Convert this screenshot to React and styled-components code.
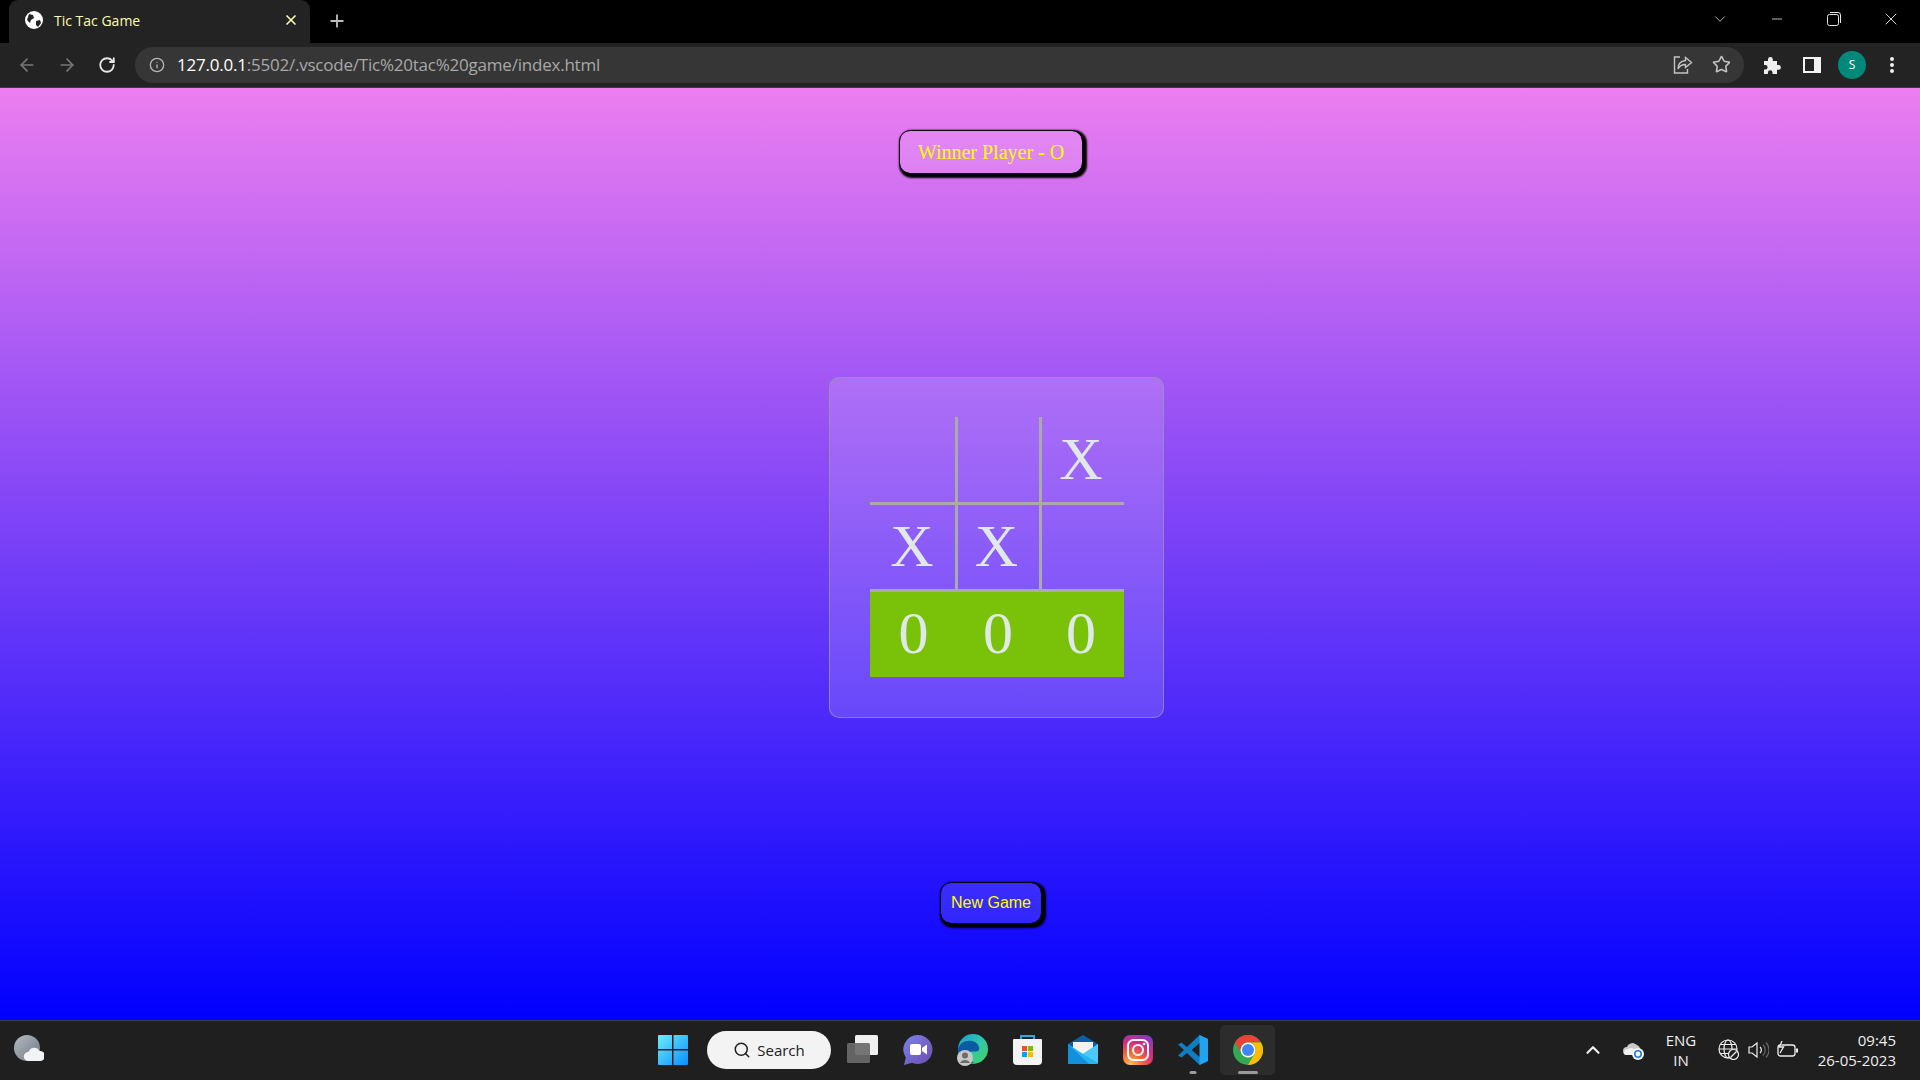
import React from "react"
import styled, { createGlobalStyle } from "styled-components"
import { ArrowLeft, ArrowRight, RotateCw, Info, Star, Search, X, Plus, ChevronDown, ChevronUp, Minus } from "lucide-react"

const Global = createGlobalStyle`
  html, body { margin: 0; padding: 0; height: 100%; overflow: hidden; }
  body { font-family: "Open Sans", "Liberation Sans", sans-serif; }
  * { box-sizing: border-box; }
`

const Shell = styled.div`
  width: 1920px;
  height: 1080px;
  display: flex;
  flex-direction: column;
`

const TabStrip = styled.div`
  height: 43px;
  background: #000;
  display: flex;
  align-items: flex-end;
  padding-left: 9px;
  color: #fff;
`

const Tab = styled.div`
  width: 301px;
  height: 43px;
  background: #232323;
  border-radius: 9px 9px 0 0;
  display: flex;
  align-items: center;
  padding: 0 11px 3px 16px;
`

const TabTitle = styled.span`
  font-size: 14px;
  color: #fdfdb4;
  margin-left: 11px;
  flex: 1;
`

const NewTab = styled.div`
  width: 54px;
  height: 41px;
  padding-bottom: 3px;
  display: flex;
  align-items: center;
  justify-content: center;
  color: #bdbdbd;
`

const WindowControls = styled.div`
  margin-left: auto;
  height: 43px;
  display: flex;
  align-items: center;
  padding: 0 1px 5px 0;
`

const WindowButton = styled.div`
  width: 57px;
  height: 37px;
  display: flex;
  align-items: center;
  justify-content: center;
  color: #e8e8e8;
`

const Toolbar = styled.div`
  height: 45px;
  background: #232323;
  display: flex;
  align-items: center;
  padding: 0 8px 1px 7px;
  border-bottom: 1px solid #3c3c3c;
`

const NavButton = styled.div`
  width: 40px;
  height: 36px;
  display: flex;
  align-items: center;
  justify-content: center;
  color: ${(p) => (p.$on ? "#e8e8e8" : "#777")};
`

const Omnibox = styled.div`
  width: 1610px;
  height: 36px;
  margin-left: 8px;
  background: #363636;
  border-radius: 18px;
  display: flex;
  align-items: center;
  padding: 0 3px 0 14px;
  color: #b5b5b5;
`

const Url = styled.div`
  margin-left: 12px;
  font-size: 17px;
  letter-spacing: -0.22px;
  color: #a8a8a8;
  flex: 1;
  b { font-weight: 400; color: #fff; }
`

const OmniIcon = styled.div`
  width: 39px;
  display: flex;
  justify-content: center;
  color: #c4c4c4;
`

const ToolIcons = styled.div`
  display: flex;
  align-items: center;
  margin-left: 8px;
`

const ToolIcon = styled.div`
  width: 40px;
  display: flex;
  justify-content: center;
  color: #eee;
`

const Avatar = styled.div`
  width: 28px;
  height: 28px;
  border-radius: 50%;
  background: #00897b;
  color: #fff;
  font-size: 12px;
  display: flex;
  align-items: center;
  justify-content: center;
`

const Page = styled.main`
  flex: 1;
  background: linear-gradient(#ec7ef0, blue);
  display: flex;
  flex-direction: column;
  align-items: center;
  padding: 43px 0 0 62px;
`

const GameButton = styled.button`
  height: ${(p) => p.$h}px;
  width: ${(p) => p.$w}px;
  border: 0;
  border-radius: 10px;
  background: rgba(255, 255, 255, 0.11);
  color: yellow;
  font-family: ${(p) => (p.$serif ? '"Liberation Serif", serif' : '"Liberation Sans", sans-serif')};
  font-size: ${(p) => (p.$serif ? 20 : 16)}px;
  box-shadow: 2px 2px 2px 3px #000;
  outline: 1px solid rgba(0, 0, 0, 0.75);
  padding: 0;
`

const Board = styled.div`
  width: 335px;
  height: 341px;
  margin: 204px 0 165px 10px;
  padding: 39px 40px 41px;
  border: 1px solid rgba(150, 150, 170, 0.75);
  border-radius: 10px;
  background: rgba(255, 255, 255, 0.15);
`

const Grid = styled.div`
  display: grid;
  grid-template-columns: 88px 84px 82px;
  grid-template-rows: 88px 87px 85px;
`

const Cell = styled.div`
  display: flex;
  align-items: center;
  justify-content: center;
  padding-bottom: ${(p) => p.$lift}px;
  font-family: "Liberation Serif", serif;
  font-size: 60px;
  color: #e0e8e8;
  background: ${(p) => (p.$win ? "#7ac20a" : "transparent")};
  border-right: ${(p) => (p.$right ? "3px solid #aaa" : "0")};
  border-bottom: ${(p) => (p.$bottom ? "3px solid #aaa" : "0")};
  &:not(:nth-child(3n + 1)) {
    padding-right: 3px;
  }
`

const Taskbar = styled.div`
  height: 60px;
  background: #1f1f1f;
  border-top: 1px solid #3d3d4a;
  padding-bottom: 2px;
  display: flex;
  align-items: center;
  position: relative;
`

const Weather = styled.div`
  width: 648px;
  padding-left: 14px;
  display: flex;
`

const StartSlot = styled.div`
  width: 50px;
  display: flex;
  justify-content: center;
`

const SearchPill = styled.div`
  width: 124px;
  height: 38px;
  margin: 0 4px 0 9px;
  background: #f3f3f3;
  border-radius: 19px;
  display: flex;
  align-items: center;
  justify-content: center;
  gap: 6px;
  color: #222;
  font-size: 15px;
`

const AppSlot = styled.div`
  width: 55px;
  height: 50px;
  border-radius: 5px;
  display: flex;
  align-items: center;
  justify-content: center;
  position: relative;
  background: ${(p) => (p.$active ? "#2c2c2c" : "transparent")};
`

const Indicator = styled.span`
  position: absolute;
  bottom: 1px;
  left: 50%;
  transform: translateX(-50%);
  width: ${(p) => (p.$wide ? 20 : 7)}px;
  height: 3px;
  border-radius: 2px;
  background: #9a9a9a;
`

const Tray = styled.div`
  margin-left: auto;
  display: flex;
  align-items: center;
  color: #eee;
  padding-right: 24px;
`

const TrayIcon = styled.div`
  width: ${(p) => p.$w}px;
  display: flex;
  justify-content: center;
`

const Lang = styled.div`
  width: 56px;
  text-align: center;
  font-size: 15px;
  line-height: 20px;
  margin-right: 4px;
`

const Clock = styled.div`
  width: 93px;
  text-align: right;
  font-size: 15px;
  line-height: 20px;
  white-space: nowrap;
`

const Globe = () => (
  <svg width="18" height="18" viewBox="0 0 18 18">
    <circle cx="9" cy="9" r="9" fill="#fff" />
    <path d="M4 3l4 1 1 3-3 2-1 3-3-3zM11 10l4-1 1 3-3 4-2-2z" fill="#232323" />
  </svg>
)

const Puzzle = () => (
  <svg width="20" height="20" viewBox="0 0 20 20" fill="currentColor">
    <path d="M2 6h4V4.500a2.400 2.400 0 0 1 4.800 0V6h4.200v4h1.500a2.400 2.400 0 0 1 0 4.800H15V19H10.500v-1.500a2.300 2.300 0 0 0-4.600 0V19H2v-4.500h1.300a2.300 2.300 0 0 0 0-4.600H2z" />
  </svg>
)

const Share = () => (
  <svg width="20" height="20" viewBox="0 0 20 20" fill="none" stroke="currentColor" strokeWidth="1.4">
    <path d="M7 2H1.500v16h13v-4" />
    <path d="M12.500 2.500l6 5-6 5V9.500C9 9.500 6.500 11 5 14c0-5 3-8 7.500-8.500z" />
  </svg>
)

const SidePanel = () => (
  <svg width="18" height="18" viewBox="0 0 18 18">
    <rect x="0" y="1" width="18" height="16" fill="#f2f2f2" />
    <rect x="2" y="3" width="9" height="12" fill="#232323" />
  </svg>
)

const Restore = () => (
  <svg width="14" height="14" viewBox="0 0 14 14" fill="none" stroke="currentColor" strokeWidth="1">
    <rect x="0.500" y="2.500" width="11" height="11" rx="2" />
    <path d="M3 .5h8a2.500 2.500 0 0 1 2.500 2.500v8" />
  </svg>
)

const WeatherIcon = () => (
  <svg width="30" height="30" viewBox="0 0 30 30">
    <defs>
      <linearGradient id="moon" x1="0" y1="0" x2="1" y2="1">
        <stop offset="0" stopColor="#b4bcc4" />
        <stop offset="1" stopColor="#6e7780" />
      </linearGradient>
    </defs>
    <circle cx="13" cy="13" r="13" fill="url(#moon)" />
    <path d="M14 26a4.500 4.500 0 0 1 .5-9 6 6 0 0 1 11-1 5 5 0 0 1 1 10z" fill="#f1f3f4" />
  </svg>
)

const WinLogo = () => (
  <svg width="30" height="30" viewBox="0 0 30 30">
    <defs>
      <linearGradient id="winl" x1="0" y1="0" x2="1" y2="1">
        <stop offset="0" stopColor="#6cecfb" />
        <stop offset="1" stopColor="#0a8fff" />
      </linearGradient>
    </defs>
    <path d="M1 0h13v14H0V1a1 1 0 0 1 1-1zM15.500 0H29a1 1 0 0 1 1 1v13H15.500zM0 15.500h14V30H1a1 1 0 0 1-1-1zM15.500 15.500H30V29a1 1 0 0 1-1 1H15.500z" fill="url(#winl)" />
  </svg>
)

const TaskView = () => (
  <svg width="31" height="29" viewBox="0 0 31 29">
    <rect x="8" y="0" width="23" height="20" rx="1.500" fill="#f0f0f0" />
    <rect x="0" y="8" width="23" height="20" rx="1.500" fill="#6a6a6a" fillOpacity="0.92" />
  </svg>
)

const Meet = () => (
  <svg width="30" height="30" viewBox="0 0 30 30">
    <defs>
      <linearGradient id="meet" x1="0" y1="0" x2="1" y2="1">
        <stop offset="0" stopColor="#7b83eb" />
        <stop offset="1" stopColor="#6d4aad" />
      </linearGradient>
    </defs>
    <path d="M15 0a14.500 14.500 0 1 1-6 27.700L1 30l1.800-7.500A14.500 14.500 0 0 1 15 0z" fill="url(#meet)" />
    <rect x="7" y="9" width="11" height="11" rx="2" fill="#fff" />
    <path d="M19 13l5-3.500v10L19 16z" fill="#fff" />
  </svg>
)

const Edge = () => (
  <svg width="32" height="32" viewBox="0 0 32 32">
    <defs>
      <linearGradient id="edgeg" x1="0" y1="0" x2="1" y2="1">
        <stop offset="0" stopColor="#1a9ad8" />
        <stop offset="0.5" stopColor="#2fc8a8" />
        <stop offset="1" stopColor="#49d25f" />
      </linearGradient>
    </defs>
    <circle cx="16" cy="15" r="15" fill="url(#edgeg)" />
    <path d="M1 15C3 7 12 5 18 8c5 3 5 8 3 9-3 1-6 0-8 1-3 2 0 8 4 11-8 2-16-5-16-14z" fill="#0c59a4" />
    <circle cx="8" cy="24" r="8" fill="#c8c8c8" />
    <circle cx="8" cy="21.500" r="3" fill="#6b6b6b" />
    <path d="M3 29a5.500 5 0 0 1 10 0z" fill="#6b6b6b" />
  </svg>
)

const Store = () => (
  <svg width="29" height="31" viewBox="0 0 29 31">
    <path d="M8 6V2h13v4" fill="none" stroke="#2aa6e8" strokeWidth="2" />
    <path d="M1 5h27a1 1 0 0 1 1 1v21a4 4 0 0 1-4 4H4a4 4 0 0 1-4-4V6a1 1 0 0 1 1-1z" fill="#f4f4f4" />
    <rect x="9" y="12" width="5" height="5" fill="#f25022" />
    <rect x="15" y="12" width="5" height="5" fill="#7fba00" />
    <rect x="9" y="18" width="5" height="5" fill="#00a4ef" />
    <rect x="15" y="18" width="5" height="5" fill="#ffb900" />
  </svg>
)

const Mail = () => (
  <svg width="30" height="29" viewBox="0 0 30 29">
    <path d="M0 9l15-9 15 9v4H0z" fill="#0b5fa8" />
    <path d="M5 7h20v12H5z" fill="#f2f2f2" />
    <path d="M0 9l15 10L30 9v19a1 1 0 0 1-1 1H1a1 1 0 0 1-1-1z" fill="#25b6f2" />
    <path d="M0 9v19a1 1 0 0 0 1 1h20z" fill="#1390dc" />
    <path d="M30 28L15 19l15-10z" fill="#4ccaf7" />
  </svg>
)

const Instagram = () => (
  <svg width="30" height="30" viewBox="0 0 30 30">
    <defs>
      <radialGradient id="ig" cx="0.25" cy="1" r="1.200">
        <stop offset="0" stopColor="#fdc15b" />
        <stop offset="0.35" stopColor="#f0663a" />
        <stop offset="0.65" stopColor="#d22a85" />
        <stop offset="1" stopColor="#6a45c8" />
      </radialGradient>
    </defs>
    <rect width="30" height="30" rx="7" fill="url(#ig)" />
    <rect x="5" y="5" width="20" height="20" rx="5.500" fill="none" stroke="#fff" strokeWidth="2" />
    <circle cx="15" cy="15" r="5" fill="none" stroke="#fff" strokeWidth="2" />
    <circle cx="21" cy="9" r="1.300" fill="#fff" />
  </svg>
)

const VsCode = () => (
  <svg width="30" height="30" viewBox="0 0 30 30">
    <path d="M21.500 0L30 4v22l-8.500 4L9 18l-5.500 4.500L0 20.500 6 15 0 9.500 3.500 7.500 9 12z" fill="#0f7cc4" />
    <path d="M21.500 0L30 4v22l-8.500 4zM21.500 8l-8 7 8 7z" fill="#22a3ef" />
    <path d="M21.500 8l-8 7 8 7z" fill="#1f1f1f" />
  </svg>
)

const Chrome = () => (
  <svg width="30" height="30" viewBox="0 0 30 30">
    <circle cx="15" cy="15" r="15" fill="#34a853" />
    <path d="M15 0a15 15 0 0 1 13 7.500H15a7.500 7.500 0 0 0-6.500 11.250L2 7.500A15 15 0 0 1 15 0z" fill="#ea4335" />
    <path d="M28 7.500A15 15 0 0 1 15 30l6.500-11.250A7.500 7.500 0 0 0 15 7.500z" fill="#fbbc04" />
    <circle cx="15" cy="15" r="7.500" fill="#fff" />
    <circle cx="15" cy="15" r="6" fill="#4285f4" />
  </svg>
)

const CloudSync = () => (
  <svg width="22" height="20" viewBox="0 0 22 20">
    <path d="M5 15a4 4 0 0 1 0-8 6 6 0 0 1 10-2 5 5 0 0 1 3 5v5z" fill="#c9c9c9" />
    <path d="M3 15a3.500 3.500 0 0 1 3-6 5 5 0 0 1 7 1v5z" fill="#f1f1f1" />
    <circle cx="16" cy="14" r="6" fill="#f4f8fb" />
    <circle cx="16" cy="14" r="3.200" fill="none" stroke="#2a7fd4" strokeWidth="1.600" />
  </svg>
)

const GlobeOff = () => (
  <svg width="21" height="21" viewBox="0 0 21 21" fill="none" stroke="currentColor" strokeWidth="1.200">
    <circle cx="10" cy="10" r="9" />
    <ellipse cx="10" cy="10" rx="4" ry="9" />
    <path d="M1 10h18M2.500 5.500h15M2.500 14.500h15" />
    <circle cx="15.500" cy="15.500" r="5" fill="#1f1f1f" />
    <path d="M12.500 18.500l6-6" />
  </svg>
)

const Speaker = () => (
  <svg width="21" height="18" viewBox="0 0 21 18" fill="none" stroke="currentColor" strokeWidth="1.200">
    <path d="M1 6h3l5-4v14l-5-4H1z" />
    <path d="M12 6a4 4 0 0 1 0 6" />
    <path d="M15 3.500a8 8 0 0 1 0 11M18 1.500a11 11 0 0 1 0 15" stroke="#666" />
  </svg>
)

const Battery = () => (
  <svg width="22" height="18" viewBox="0 0 22 18" fill="none" stroke="currentColor" strokeWidth="1.300">
    <rect x="1" y="4" width="17" height="11" rx="2.500" />
    <path d="M20 7.500v4" strokeWidth="2" />
    <path d="M5 0L2.500 6h4L3 12" fill="#1f1f1f" />
  </svg>
)

const rows = [
  ["", "", "X"],
  ["X", "X", ""],
  ["0", "0", "0"],
]

const lifts = [0, 2, 2]

export default function App() {
  return (
    <Shell>
      <Global />
      <TabStrip>
        <Tab>
          <Globe />
          <TabTitle>Tic Tac Game</TabTitle>
          <X size={16} color="#fdfdb4" strokeWidth={2.5} />
        </Tab>
        <NewTab>
          <Plus size={20} strokeWidth={2.2} />
        </NewTab>
        <WindowControls>
          <WindowButton><ChevronDown size={18} strokeWidth={1} /></WindowButton>
          <WindowButton><Minus size={16} strokeWidth={1.2} /></WindowButton>
          <WindowButton><Restore /></WindowButton>
          <WindowButton><X size={20} strokeWidth={1.1} /></WindowButton>
        </WindowControls>
      </TabStrip>
      <Toolbar>
        <NavButton><ArrowLeft size={20} /></NavButton>
        <NavButton><ArrowRight size={20} /></NavButton>
        <NavButton $on><RotateCw size={18} strokeWidth={2.4} /></NavButton>
        <Omnibox>
          <Info size={16} />
          <Url><b>127.0.0.1</b>:5502/.vscode/Tic%20tac%20game/index.html</Url>
          <OmniIcon><Share /></OmniIcon>
          <OmniIcon><Star size={19} /></OmniIcon>
        </Omnibox>
        <ToolIcons>
          <ToolIcon><Puzzle /></ToolIcon>
          <ToolIcon><SidePanel /></ToolIcon>
          <ToolIcon><Avatar>S</Avatar></ToolIcon>
          <ToolIcon>
            <svg width="6" height="18" viewBox="0 0 6 18" fill="currentColor">
              <circle cx="3" cy="3" r="2" />
              <circle cx="3" cy="9" r="2" />
              <circle cx="3" cy="15" r="2" />
            </svg>
          </ToolIcon>
        </ToolIcons>
      </Toolbar>
      <Page>
        <GameButton $w={182} $h={42} $serif>Winner Player - O</GameButton>
        <Board>
          <Grid>
            {rows.flatMap((row, r) =>
              row.map((mark, c) => (
                <Cell key={`${r}-${c}`} $lift={lifts[r]} $win={r === 2} $right={r < 2 && c < 2} $bottom={r < 2}>
                  {mark}
                </Cell>
              ))
            )}
          </Grid>
        </Board>
        <GameButton $w={100} $h={40}>New Game</GameButton>
      </Page>
      <Taskbar>
        <Weather><WeatherIcon /></Weather>
        <StartSlot><WinLogo /></StartSlot>
        <SearchPill><Search size={18} />Search</SearchPill>
        <AppSlot><TaskView /></AppSlot>
        <AppSlot><Meet /></AppSlot>
        <AppSlot><Edge /></AppSlot>
        <AppSlot><Store /></AppSlot>
        <AppSlot><Mail /></AppSlot>
        <AppSlot><Instagram /></AppSlot>
        <AppSlot><VsCode /><Indicator /></AppSlot>
        <AppSlot $active><Chrome /><Indicator $wide /></AppSlot>
        <Tray>
          <TrayIcon $w={40}><ChevronUp size={22} strokeWidth={2.4} /></TrayIcon>
          <TrayIcon $w={40}><CloudSync /></TrayIcon>
          <Lang>ENG<br />IN</Lang>
          <TrayIcon $w={30}><GlobeOff /></TrayIcon>
          <TrayIcon $w={30}><Speaker /></TrayIcon>
          <TrayIcon $w={30}><Battery /></TrayIcon>
          <Clock>09:45<br />26-05-2023</Clock>
        </Tray>
      </Taskbar>
    </Shell>
  )
}
